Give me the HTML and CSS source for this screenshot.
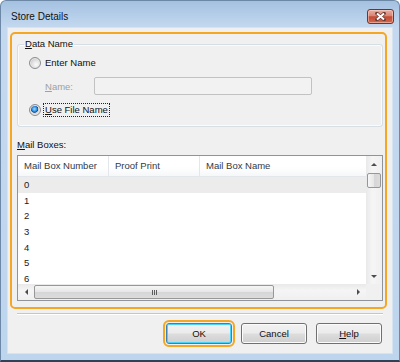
FILE: index.html
```html
<!DOCTYPE html>
<html lang="en">
<head>
    <meta charset="UTF-8">
    <title>Store Details</title>
    <link rel="stylesheet" href="styles.css">
</head>
<body>
    <div class="window">
        <div class="titlebar">
            <span class="title">Store Details</span>
            <button class="close" title="Close">
                <svg width="11" height="9" viewBox="0 0 11 9">
                    <path d="M2 1.5 L9 7.5 M9 1.5 L2 7.5" stroke="#6b3a33" stroke-width="3.6" stroke-linecap="round"/>
                    <path d="M2 1.5 L9 7.5 M9 1.5 L2 7.5" stroke="#ffffff" stroke-width="2"/>
                </svg>
            </button>
        </div>

        <div class="client">
            <!-- highlighted area -->
            <div class="highlight">
                <fieldset class="group">
                    <legend><u>D</u>ata Name</legend>
                    <label class="radio-row first">
                        <span class="radio"></span>
                        <span class="radio-text">Enter Name</span>
                    </label>
                    <div class="name-row">
                        <span class="name-label"><u>N</u>ame:</span>
                        <span class="textbox"></span>
                    </div>
                    <label class="radio-row last">
                        <span class="radio checked"></span>
                        <span class="radio-text focus"><u>U</u>se File Name</span>
                    </label>
                </fieldset>

                <div class="list-label"><u>M</u>ail Boxes:</div>

                <div class="listview">
                    <div class="list-main">
                        <div class="list-header">
                            <div class="col c1">Mail Box Number</div>
                            <div class="col c2">Proof Print</div>
                            <div class="col c3">Mail Box Name</div>
                        </div>
                        <div class="row selected">0</div>
                        <div class="row">1</div>
                        <div class="row">2</div>
                        <div class="row">3</div>
                        <div class="row">4</div>
                        <div class="row">5</div>
                        <div class="row">6</div>
                    </div>
                    <div class="vscroll">
                        <div class="sbtn"><span class="arrow up"></span></div>
                        <div class="vthumb"></div>
                        <div class="vtrack"></div>
                        <div class="sbtn"><span class="arrow down"></span></div>
                    </div>
                    <div class="hscroll">
                        <div class="sbtn"><span class="arrow left"></span></div>
                        <div class="hthumb"><span class="grip"></span></div>
                        <div class="htrack"></div>
                        <div class="sbtn"><span class="arrow right"></span></div>
                    </div>
                    <div class="corner"></div>
                </div>
            </div>

            <div class="separator"></div>

            <div class="buttons">
                <button class="btn default">OK</button>
                <button class="btn">Cancel</button>
                <button class="btn"><u>H</u>elp</button>
            </div>
        </div>
    </div>
</body>
</html>
```

FILE: styles.css
```css
body {
    margin: 0;
    font-family: "Liberation Sans", Arial, sans-serif;
    font-size: 9.5px;
    color: #111111;
    background: #ffffff;
}

u {
    text-decoration: underline;
    text-underline-offset: 1px;
}

/* window frame */
.window {
    width: 400px;
    height: 362px;
    box-sizing: border-box;
    display: flex;
    flex-direction: column;
    padding: 0 7px 7px;
    border: 1px solid #6d88a6;
    border-bottom: 2px solid #2f4257;
    border-radius: 6px 6px 0 0;
    background: linear-gradient(#a4c1e1, #c4d9ef 27px, #bed5ee);
}

.titlebar {
    height: 27px;
    display: flex;
    align-items: flex-start;
    justify-content: space-between;
}

.title {
    margin: 10px 0 0 3px;
    font-size: 10px;
    line-height: 12px;
    color: #111111;
}

.close {
    width: 27px;
    height: 15px;
    margin: 8px -2px 0 0;
    padding: 0;
    display: flex;
    align-items: center;
    justify-content: center;
    border: 1px solid #7a3127;
    border-radius: 3px;
    background: linear-gradient(#e8b0a4, #d88473 45%, #c34a35 52%, #cf6a50);
    box-shadow: inset 0 0 0 1px rgba(255, 220, 210, 0.5);
}

.client {
    flex: 1;
    background: #f0f0f0;
    display: flex;
    flex-direction: column;
    box-shadow: 0 0 0 1px #d6e3f1;
}

/* orange highlight */
.highlight {
    height: 277px;
    box-sizing: border-box;
    margin: 4px 5px 0 2px;
    padding: 0 2px 0 5px;
    border: 2px solid #f5a623;
    border-radius: 5px;
}

.group {
    margin: 4px 0 0;
    padding: 5px 6px 9px;
    border: 1px solid #d5dfe5;
    border-radius: 3px;
    box-shadow: inset 0 0 0 1px #fbfbfb;
}

.group legend {
    padding: 0 1px;
    line-height: 12px;
}

.radio-row {
    display: flex;
    align-items: center;
}

.radio-row.first {
    height: 16px;
}

.radio-row.last {
    height: 14px;
    margin-top: 8px;
}

.radio {
    width: 10px;
    height: 10px;
    margin: 0 3px 0 5px;
    border: 1px solid #8a8c8e;
    border-radius: 50%;
    background: radial-gradient(circle at 62% 65%, #fbfbfb 0, #e4e4e4 40%, #c9c9c9 75%, #bdbdbd 100%);
    box-shadow: inset 0 0 0 1px #e9e9e9;
}

.radio.checked {
    background: radial-gradient(circle at 45% 40%, #9ee0fb 0, #2d8be0 30%, #124f99 42%, #d4d4d4 50%, #f4f4f4 100%);
}

.radio-text {
    padding: 0 1px;
    line-height: 12px;
}

.radio-text.focus {
    border: 1px dotted #222222;
    margin-left: -1px;
}

.name-row {
    display: flex;
    align-items: center;
    height: 18px;
    margin-top: 6px;
}

.name-label {
    width: 49px;
    margin-left: 21px;
    color: #a0a0a0;
}

.textbox {
    width: 218px;
    height: 18px;
    box-sizing: border-box;
    border: 1px solid #c2c2c2;
    border-radius: 2px;
    background: #f2f2f2;
}

.list-label {
    margin-top: 12px;
    line-height: 12px;
}

/* list view */
.listview {
    height: 146px;
    box-sizing: border-box;
    margin-top: 4px;
    border: 1px solid #8f949b;
    display: grid;
    grid-template-columns: 1fr 16px;
    grid-template-rows: 1fr 16px;
    background: #ffffff;
}

.list-main {
    overflow: hidden;
}

.list-header {
    display: flex;
    height: 21px;
    box-sizing: border-box;
    border-bottom: 1px solid #e3e6ea;
    background: linear-gradient(#ffffff, #ffffff 55%, #f6f7f9);
    color: #2f3a48;
}

.col {
    box-sizing: border-box;
    padding-left: 6px;
    line-height: 20px;
    border-right: 1px solid #e3e6ea;
}

.c1 {
    width: 91px;
}

.c2 {
    width: 91px;
}

.c3 {
    flex: 1;
    border-right: none;
}

.row {
    height: 15.7px;
    line-height: 15.7px;
    padding-left: 6px;
    color: #1a1a1a;
}

.row.selected {
    background: #ececec;
}

/* scrollbars */
.vscroll {
    display: flex;
    flex-direction: column;
    background: linear-gradient(to right, #e9e9e9, #f5f5f5 40%, #f0f0f0);
}

.hscroll {
    display: flex;
    background: linear-gradient(#e9e9e9, #f5f5f5 40%, #f0f0f0);
}

.sbtn {
    width: 16px;
    height: 16px;
    display: flex;
    align-items: center;
    justify-content: center;
}

.vtrack,
.htrack {
    flex: 1;
}

.vthumb {
    height: 15px;
    margin: 1px 1px 0;
    box-sizing: border-box;
    border: 1px solid #979797;
    border-radius: 2px;
    background: linear-gradient(to right, #f6f6f6, #e6e6e6 50%, #d6d6d6 51%, #dcdcdc);
}

.hthumb {
    width: 240px;
    margin: 1px 0;
    box-sizing: border-box;
    border: 1px solid #979797;
    border-radius: 2px;
    background: linear-gradient(#f6f6f6, #e6e6e6 50%, #d6d6d6 51%, #dcdcdc);
    display: flex;
    align-items: center;
    justify-content: center;
}

.grip {
    width: 5px;
    height: 5px;
    background: repeating-linear-gradient(to right, #5c5c5c 0, #5c5c5c 1px, transparent 1px, transparent 2px);
}

.arrow {
    width: 0;
    height: 0;
}

.arrow.up {
    border-left: 3px solid transparent;
    border-right: 3px solid transparent;
    border-bottom: 3px solid #4c4c4c;
}

.arrow.down {
    border-left: 3px solid transparent;
    border-right: 3px solid transparent;
    border-top: 3px solid #4c4c4c;
}

.arrow.left {
    border-top: 3px solid transparent;
    border-bottom: 3px solid transparent;
    border-right: 3px solid #4c4c4c;
}

.arrow.right {
    border-top: 3px solid transparent;
    border-bottom: 3px solid transparent;
    border-left: 3px solid #4c4c4c;
}

.corner {
    background: #f0f0f0;
}

/* bottom part */
.separator {
    margin: 4px 9px 0;
    border-top: 1px solid #c6c6c6;
    border-bottom: 1px solid #ffffff;
}

.buttons {
    display: flex;
    justify-content: flex-end;
    gap: 9px;
    margin-top: 8px;
    padding-right: 10px;
}

.btn {
    width: 66px;
    height: 21px;
    padding: 0;
    font-family: inherit;
    font-size: 9.5px;
    color: #111111;
    border: 1px solid #707070;
    border-radius: 3px;
    background: linear-gradient(#f2f2f2, #ebebeb 48%, #dddddd 52%, #cfcfcf);
    box-shadow: inset 0 0 0 1px #fbfbfb;
}

.btn.default {
    border-color: #3c7fb1;
    box-shadow: inset 0 0 0 1px #48d4f8;
    outline: 2px solid #f5a623;
    outline-offset: 1px;
}
```
